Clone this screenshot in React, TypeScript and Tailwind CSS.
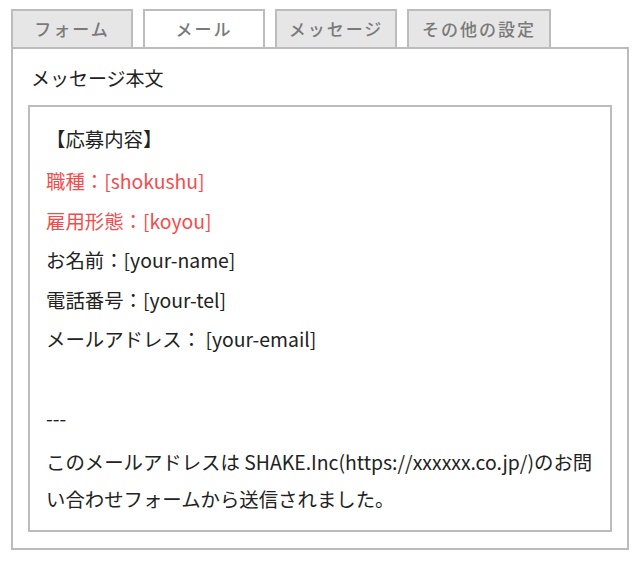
const tabs = [
  { label: "フォーム", width: "w-[122px]" },
  { label: "メール", width: "w-[122px]", active: true },
  { label: "メッセージ", width: "w-[122px]" },
  { label: "その他の設定", width: "w-[144px]" },
];

const lines: { text: string; red?: boolean; gap?: string }[] = [
  { text: "【応募内容】", gap: "mb-[5px]" },
  { text: "職種：[shokushu]", red: true },
  { text: "雇用形態：[koyou]", red: true },
  { text: "お名前：[your-name]" },
  { text: "電話番号：[your-tel]" },
  { text: "メールアドレス： [your-email]" },
  { text: "" },
  { text: "---", gap: "mb-[7px]" },
  {
    text: "このメールアドレスは SHAKE.Inc(https://xxxxxx.co.jp/)のお問い合わせフォームから送信されました。",
    gap: "mb-0",
  },
];

export default function App() {
  return (
    <div
      className="w-[640px] h-[566px] bg-white pt-[9px] pl-[11px]"
      style={{ fontFamily: '"Noto Sans CJK JP", "Noto Sans", sans-serif' }}
    >
      {/* Tabs */}
      <div className="flex gap-[10px] items-end">
        {tabs.map((tab) => (
          <div
            key={tab.label}
            className={`${tab.width} h-[38px] border-2 border-b-0 border-[#bcbcbc] flex items-center justify-center text-[17px] font-medium tracking-[2px] text-[#7a7a7a] ${
              tab.active ? "bg-white" : "bg-[#e6e6e6]"
            }`}
          >
            {tab.label}
          </div>
        ))}
      </div>

      {/* Panel */}
      <div className="w-[618px] border-2 border-[#bcbcbc] px-[15px] pt-[14px] pb-[16px]">
        <h2 className="text-[19px] leading-[30px] text-[#222] pl-[3px] mb-[12px]">
          メッセージ本文
        </h2>
        <div className="border-2 border-[#bcbcbc] px-[16px] pt-[13px] pb-[13px]">
          {lines.map((line, i) => (
            <p
              key={i}
              className={`text-[19.4px] leading-[37px] min-h-[37px] ${line.gap ?? "mb-[2.5px]"} ${
                line.red ? "text-[#f44c4c]" : "text-[#222]"
              }`}
            >
              {line.text}
            </p>
          ))}
        </div>
      </div>
    </div>
  );
}
